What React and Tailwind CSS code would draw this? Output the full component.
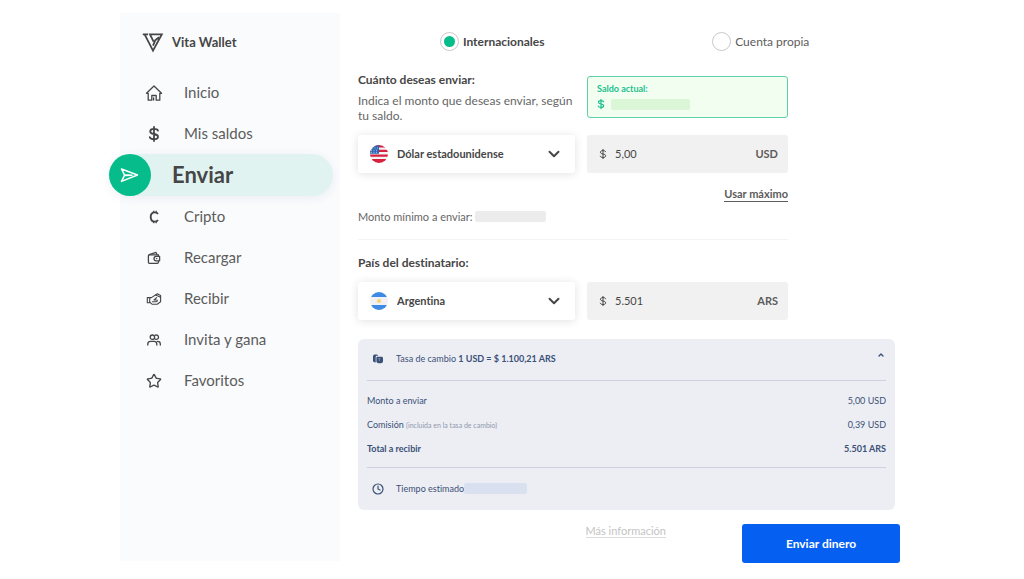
import React, { useState } from 'react';
import { ChevronDown, ChevronUp, Clock, Star } from 'lucide-react';

const stroke = {
  fill: 'none',
  stroke: 'currentColor',
  strokeLinecap: 'round',
  strokeLinejoin: 'round',
};

const HomeIcon = () => (
  <svg viewBox="0 0 18 18" className="size-[18px]" strokeWidth="1.3" {...stroke}>
    <path d="M3.200 9.300H1.500L9 2l7.500 7.300h-1.700M3.200 9.300V16.200h3.600v-4.700h4.400v4.700h3.600V9.300M8.600 16v-2.200" />
  </svg>
);

const DollarIcon = ({ className = 'size-[18px]', width = 1.8 }) => (
  <svg viewBox="0 0 18 18" className={className} strokeWidth={width} {...stroke}>
    <path d="M9 2v14M13 5.600C12.500 4.400 11 3.900 9 3.900 6.600 3.900 5.200 4.800 5.200 6.400 5.200 8.200 6.800 8.600 9 9c2.300.400 4 1 4 2.700 0 1.700-1.500 2.500-4 2.500-2.200 0-3.700-.700-4.200-2" />
  </svg>
);

const SendIcon = () => (
  <svg viewBox="0 0 20 20" className="size-5" strokeWidth="1.5" {...stroke}>
    <path d="M1.500 4 17.500 10 1.500 16.400 4.600 10.200zM4.800 10.600 12 10.200 4.800 9.800" />
  </svg>
);

const CryptoIcon = () => (
  <svg viewBox="0 0 18 18" className="size-[18px]" strokeWidth="1.9" {...stroke} strokeLinecap="butt">
    <path d="M13 6.100C12.300 5 11.200 4.400 9.800 4.400 7.300 4.400 5.700 6.300 5.700 9s1.600 4.600 4.100 4.600c1.400 0 2.500-.600 3.200-1.700" />
    <path d="M8.700 2.800v2M11.200 2.800v2M8.700 13.200v2M11.200 13.200v2" strokeWidth="1.200" />
  </svg>
);

const WalletIcon = () => (
  <svg viewBox="0 0 18 18" className="size-[18px]" strokeWidth="1.3" {...stroke}>
    <path d="M13.400 6.900V5.800H4.400C3.600 5.800 3.400 6.300 3.400 6.800v6.400c0 .700.400 1.100 1.100 1.100h7.800c.700 0 1.100-.400 1.100-1.100v-.900" />
    <path d="M4.200 5.600 11 3.400l1 2.200" />
    <path d="M14.600 7.400h-3.400a2.200 2.200 0 0 0 0 4.400h3.400z" />
    <path d="M11.500 9.600h.400" />
  </svg>
);

const ReceiveIcon = () => (
  <svg viewBox="0 0 18 18" className="size-[18px]" strokeWidth="1.1" {...stroke}>
    <path d="M2.300 7.600h2.400v5.200H2.300z" />
    <path d="M4.700 12.200 7 14.200h5.200l3.400-2.400V5.600L12.400 3.800 6.400 7.600H4.700" />
    <path d="M7.400 11.700h4c1.200 0 1.200-1.700 0-1.700H9l2.600-2.400" />
    <path d="M10.600 5l5 2.200" />
  </svg>
);

const UsersIcon = () => (
  <svg viewBox="0 0 18 18" className="size-[18px]" strokeWidth="1.3" {...stroke}>
    <circle cx="7.400" cy="6.200" r="2.200" />
    <path d="M10.400 4.200a2.200 2.200 0 1 1 0 4" />
    <path d="M2.800 14v-1c0-1.600 1.200-2.600 2.800-2.600h3.400c1.600 0 2.800 1 2.800 2.600v1M12.500 10.400c1.700 0 2.800 1 2.800 2.600v1" />
  </svg>
);

const Logo = () => (
  <svg viewBox="0 0 22 20" className="h-5 w-[22px]" fill="none" stroke="currentColor" strokeWidth="1.800">
    <path d="M.800 1.400H6M2.600 1.400 11 17.600 19.800 1.400H8L11.600 8.600M17 4.200 13.200 7.400 11 12.600" />
  </svg>
);

const UsaFlag = () => (
  <svg viewBox="0 0 18 18" className="size-[18px]">
    <clipPath id="usa"><circle cx="9" cy="9" r="9" /></clipPath>
    <g clipPath="url(#usa)">
      <path fill="#f3f3f5" d="M0 0h18v18H0z" />
      <path fill="#d8203f" d="M0 0h18v2.400H0zM0 4.800h18v2.300H0zM0 9.500h18v2.300H0zM0 14.100h18V18H0z" />
      <path fill="#2b67b5" d="M0 0h9v8.800H0z" />
      <path stroke="#cfe0f5" strokeWidth=".8" strokeDasharray="1 1.500" d="M2 3h6M1 5.200h7M1 7.300h7" />
    </g>
  </svg>
);

const ArgentinaFlag = () => (
  <svg viewBox="0 0 18 18" className="size-[18px]">
    <clipPath id="arg"><circle cx="9" cy="9" r="9" /></clipPath>
    <g clipPath="url(#arg)">
      <path fill="#f1f1f3" d="M0 0h18v18H0z" />
      <path fill="#3d8ae6" d="M0 0h18v5H0zM0 13h18v5H0z" />
      <circle cx="9" cy="9" r="2" fill="#f8d272" />
    </g>
  </svg>
);

const CoinsIcon = () => (
  <svg viewBox="0 0 12 12" className="size-3" fill="currentColor">
    <path d="M1 3c0-1 1-1.600 2.600-1.600 1.500 0 2.600.500 2.600 1.400H5c-.800 0-1.300.500-1.300 1.300V9.400C2 9.300 1 8.800 1 8z" />
    <path d="M4.400 4.600c0-.500.400-.800.900-.800h4.300c.800 0 1.400.600 1.400 1.400v3.600c0 .900-1.200 1.500-3.200 1.500s-3.400-.600-3.400-1.500z" />
    <path d="M6.200 5.600h2.400M7.400 5.600v2.600" stroke="#8c9ab5" strokeWidth=".7" />
  </svg>
);

const menu = [
  { label: 'Inicio', icon: <HomeIcon /> },
  { label: 'Mis saldos', icon: <DollarIcon /> },
  { label: 'Enviar', icon: <SendIcon />, active: true },
  { label: 'Cripto', icon: <CryptoIcon /> },
  { label: 'Recargar', icon: <WalletIcon /> },
  { label: 'Recibir', icon: <ReceiveIcon /> },
  { label: 'Invita y gana', icon: <UsersIcon /> },
  { label: 'Favoritos', icon: <Star className="size-4" strokeWidth={2} /> },
];

function Sidebar() {
  return (
    <aside className="w-[220px] shrink-0 mb-[2px] bg-[#fafbfd]">
      <div className="flex items-center gap-2 h-[59px] pl-[22px]">
        <Logo />
        <span className="text-[13px] font-bold">Vita Wallet</span>
      </div>
      <nav>
        {menu.map((item) =>
          item.active ? (
            <a
              key={item.label}
              href="#"
              aria-current="page"
              className="flex items-center gap-[21px] h-[42px] -ml-[11px] mr-[7px] rounded-full bg-[#e1f3f1] shadow-[0_2px_10px_rgba(60,60,110,0.08)]"
            >
              <span className="flex items-center justify-center size-[42px] rounded-full bg-[#06bc8b] text-white">
                {item.icon}
              </span>
              <span className="text-[22px] font-bold">{item.label}</span>
            </a>
          ) : (
            <a key={item.label} href="#" className="flex items-center gap-[18px] h-[41px] pl-[22px]">
              <span className="flex justify-center w-6">{item.icon}</span>
              <span className="text-[15px] text-[#5c5c5c]">{item.label}</span>
            </a>
          )
        )}
      </nav>
    </aside>
  );
}

function AccountRadio({ label, checked, onChange }) {
  return (
    <label className={`flex items-center gap-1 text-[12px] ${checked ? 'font-bold' : 'text-[#5c5c5c]'}`}>
      <input
        type="radio"
        name="account"
        checked={checked}
        onChange={onChange}
        className="appearance-none size-[19px] p-[3px] rounded-full border border-[#c9c9cd] bg-clip-content checked:bg-[#06bc8b]"
      />
      {label}
    </label>
  );
}

function CurrencySelect({ id, label, flag, option }) {
  return (
    <div className="relative">
      <span className="absolute left-3 inset-y-0 flex items-center pointer-events-none">{flag}</span>
      <select
        id={id}
        aria-label={label}
        className="appearance-none block w-full h-[38px] pl-[39px] pr-8 rounded-[3px] bg-white text-[11px] font-bold shadow-[0_1px_10px_rgba(0,0,0,0.12)]"
      >
        <option>{option}</option>
      </select>
      <ChevronDown className="absolute right-3 top-[10px] size-[18px] pointer-events-none" strokeWidth={2.6} />
    </div>
  );
}

function AmountInput({ label, value, onChange, currency }) {
  return (
    <label className="flex items-center h-[38px] px-[10px] rounded-[3px] bg-[#f1f1f1]">
      <DollarIcon className="size-3 mr-[6px]" width={1.5} />
      <input
        type="text"
        aria-label={label}
        value={value}
        onChange={onChange}
        className="flex-1 min-w-0 bg-transparent text-[11px]"
      />
      <span className="text-[11px] font-bold text-[#5c5c5c]">{currency}</span>
    </label>
  );
}

function RateDetails() {
  return (
    <section className="mt-[19px] mr-[5px] px-[9px] rounded-[6px] bg-[#eceef3] text-[9px] text-[#3b5078]">
      <button type="button" className="flex items-center w-full h-[42px] px-[5px] border-b border-[#ccd2de] text-left">
        <CoinsIcon />
        <span className="flex-1 pl-3">
          Tasa de cambio <b>1 USD = $ 1.100,21 ARS</b>
        </span>
        <ChevronUp className="size-2 mb-2 -mr-1" strokeWidth={4} />
      </button>
      <table className="w-full mt-2 mb-[6px]">
        <tbody>
          <tr className="h-6">
            <th className="text-left font-normal">Monto a enviar</th>
            <td className="text-right">5,00 USD</td>
          </tr>
          <tr className="h-6">
            <th className="text-left font-normal">
              Comisión <span className="text-[7px] text-[#8f99ae]">(incluida en la tasa de cambio)</span>
            </th>
            <td className="text-right">0,39 USD</td>
          </tr>
          <tr className="h-6 font-bold">
            <th className="text-left">Total a recibir</th>
            <td className="text-right">5.501 ARS</td>
          </tr>
        </tbody>
      </table>
      <div className="flex items-center h-[43px] px-[5px] border-t border-[#ccd2de]">
        <Clock className="size-3" strokeWidth={2.4} />
        <span className="pl-3">Tiempo estimado</span>
        <span className="w-[63px] h-[11px] rounded-[2px] bg-[#d9e0f0]" />
      </div>
    </section>
  );
}

export default function App() {
  const [account, setAccount] = useState('internacionales');
  const [amount, setAmount] = useState('5,00');
  const [received, setReceived] = useState('5.501');

  return (
    <div className="min-h-screen bg-white pt-[13px] pb-4 text-[#464646] leading-tight font-[Lato,sans-serif] [font-variant-ligatures:none]">
      <div className="flex max-w-[784px] mx-auto">
        <Sidebar />

        <main className="flex-1 pl-[18px] pr-1">
          <div className="grid grid-cols-2 justify-items-center mr-[5px] pt-[19px]">
            <AccountRadio
              label="Internacionales"
              checked={account === 'internacionales'}
              onChange={() => setAccount('internacionales')}
            />
            <AccountRadio
              label="Cuenta propia"
              checked={account === 'propia'}
              onChange={() => setAccount('propia')}
            />
          </div>

          <div className="max-w-[430px]">
            {/* Amount to send */}
            <div className="grid grid-cols-[217fr_201fr] gap-x-3 mt-[21px]">
              <div>
                <h2 className="text-[12px] leading-[15px] font-bold">Cuánto deseas enviar:</h2>
                <p className="mt-[6px] text-[12px] leading-[15px] text-[#666]">
                  Indica el monto que deseas enviar, según tu saldo.
                </p>
              </div>
              <div className="h-[42px] mt-1 px-[9px] pt-[6px] rounded-[3px] border border-[#5fd0a9] bg-[#f1fef0] text-[#1fc08f]">
                <p className="text-[9px] font-bold">Saldo actual:</p>
                <div className="flex items-center gap-1 mt-1">
                  <DollarIcon className="size-3 -ml-[2px]" />
                  <span className="w-[79px] h-[11px] rounded-[2px] bg-[#daf6d6]" />
                </div>
              </div>
            </div>

            <div className="grid grid-cols-[217fr_201fr] gap-x-3 mt-3">
              <CurrencySelect id="from" label="Moneda" flag={<UsaFlag />} option="Dólar estadounidense" />
              <AmountInput label="Monto" value={amount} onChange={(e) => setAmount(e.target.value)} currency="USD" />
            </div>

            <div className="flex justify-end mt-[14px]">
              <button type="button" className="text-[11px] font-bold text-[#5c5c5c] border-b border-[#5c5c5c]">
                Usar máximo
              </button>
            </div>

            <div className="flex items-center gap-[2px] mt-2 pb-[15px] border-b border-[#f4f4f4] text-[11px] text-[#666]">
              Monto mínimo a enviar:
              <span className="w-[71px] h-[11px] rounded-[2px] bg-[#ececec]" />
            </div>

            {/* Recipient country */}
            <h2 className="mt-[15px] text-[12px] leading-[15px] font-bold">País del destinatario:</h2>
            <div className="grid grid-cols-[217fr_201fr] gap-x-3 mt-3">
              <CurrencySelect id="to" label="País del destinatario" flag={<ArgentinaFlag />} option="Argentina" />
              <AmountInput label="Recibe" value={received} onChange={(e) => setReceived(e.target.value)} currency="ARS" />
            </div>
          </div>

          <RateDetails />

          <div className="flex items-start justify-end gap-[76px] mt-[14px]">
            <a href="#" className="text-[11px] text-[#c4c4c4] border-b border-[#dcdcdc]">
              Más información
            </a>
            <button type="button" className="w-[158px] h-[39px] rounded-[3px] bg-[#0560f2] text-white text-[12px] font-bold">
              Enviar dinero
            </button>
          </div>
        </main>
      </div>
    </div>
  );
}
